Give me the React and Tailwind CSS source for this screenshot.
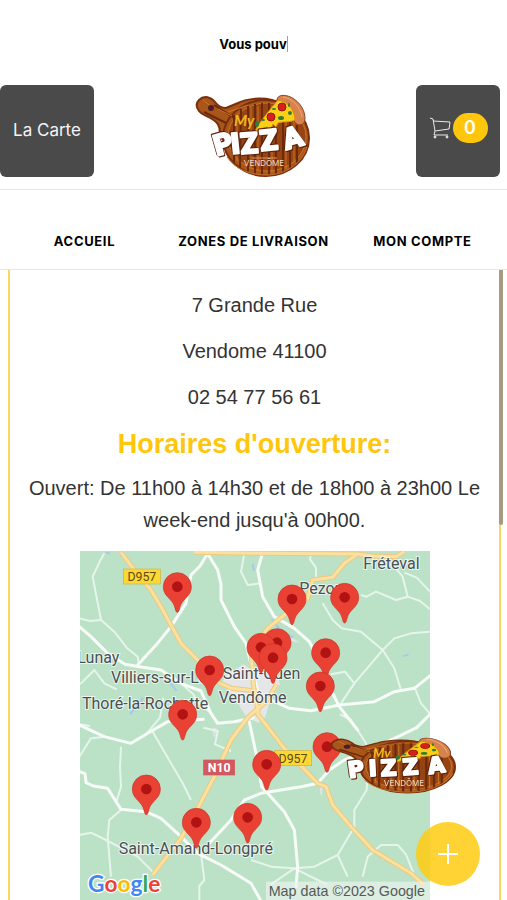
import { useState } from 'react';

const navLinks = [
  { label: 'ACCUEIL', href: '#accueil' },
  { label: 'ZONES DE LIVRAISON', href: '#zones' },
  { label: 'MON COMPTE', href: '#compte' },
];

const addressLines = ['7 Grande Rue', 'Vendome 41100', '02 54 77 56 61'];

// Delivery points, centre of each pin head in map units
const pins = [
  [292, 107],
  [636, 144],
  [794, 139],
  [591, 275],
  [543, 289],
  [579, 320],
  [737, 305],
  [721, 405],
  [389, 357],
  [308, 490],
  [741, 587],
  [560, 640],
  [199, 714],
  [503, 799],
  [349, 814],
];

const places = [
  { name: 'Fréteval', x: 850, y: 55 },
  { name: 'Pezou', x: 658, y: 130 },
  { name: 'Lunay', x: -8, y: 337 },
  { name: 'Villiers-sur-Loir', x: 93, y: 397 },
  { name: 'Thoré-la-Rochette', x: 6, y: 474 },
  { name: 'Saint-Ouen', x: 428, y: 385 },
  { name: 'Vendôme', x: 416, y: 457 },
  { name: 'Saint-Amand-Longpré', x: 116, y: 910 },
];

const smallRoads = [
  'M73 7L60 30L38 77L50 140L63 207L103 242L140 290L173 317L178 347',
  'M-2 202L30 210L63 207',
  'M0 400L43 357L73 397L110 415',
  'M-2 617L33 562L73 557',
  'M123 587L120 650L123 707L110 750',
  'M218 542L273 637L310 700L333 747',
  'M123 777L88 807L83 857L93 977',
  'M-2 852L33 845L78 867L173 917L218 962',
  'M363 907L373 987L358 1005L358 1050',
  'M493 7L483 62L503 102L543 97',
  'M693 7L690 25L708 50L708 80',
  'M843 132L860 137L888 122L948 147L983 137L1020 150L1053 177',
  'M913 27L950 55L968 77L983 137',
  'M973 65L1010 80L1053 125',
  'M728 157L758 207L785 232L843 242L908 297L943 352L963 417',
  'M908 297L943 262L993 247L1053 242',
  'M908 297L823 397L783 457',
  'M753 370L795 362L823 397',
  'M1003 407L1023 457L1053 492',
  'M513 927L573 947L643 952L703 947L773 912L823 827L823 777L860 717L863 640L858 577L813 507L780 490',
  'M643 952L713 987L740 1000',
  'M573 1000L643 952',
  'M848 977L863 917L903 882L953 882L978 910L1000 965',
  'M773 912L803 977',
  'M303 397L340 430L350 450L393 487M200 547L240 500L250 440',
  'M0 520L30 525M370 530L413 540L405 580L453 600',
];

const mainRoads = [
  'M383 8L360 45L333 72L318 157L273 227L230 280L173 342',
  'M383 8L413 57L423 100L423 147L463 227L498 277L513 340L533 420',
  'M-2 227L33 257L83 307L135 340L178 347L243 357L303 397L363 420L393 487L413 517L463 512L520 500',
  'M-2 522L73 557L153 577L203 547L263 512L370 505',
  'M-2 662L15 668L18 695L40 705L83 712L123 775L198 782L243 802L303 857L353 907L423 942L513 997L543 1050',
  'M388 877L453 807L493 747L543 727L663 707L713 697L748 657L793 627L870 597L943 562L1010 530L1053 487',
  'M508 512L528 607L545 707L613 782L643 837L653 947L648 1007',
  'M548 4L533 57L548 137L583 197L643 232L688 272L730 350L753 417L778 467L833 537',
  'M560 455L573 447L628 472L693 479L778 462L883 452L943 422L1003 412L1053 372',
];

const yellowRoads = [
  'M123 4L163 57L213 117L243 167L273 222L303 277L353 327L405 390L455 412L530 420',
  'M343 4L543 7L833 9L880 15L948 17L973 2',
  'M833 9L793 37L758 79L698 87L683 142L613 192L563 232L513 300L520 400L535 485',
  'M218 972L303 862L353 772L403 677L453 567L503 500L560 450L590 400',
  'M530 485L613 592L713 697L738 707L758 762L813 827L878 897L993 967L1033 1002',
];

function RoadSign({ x, y, width, label, red }) {
  return (
    <g>
      <rect x={x} y={y} width={width} height="45" fill={red ? '#d3595f' : '#fdd835'} stroke={red ? '#c25a5f' : '#d2b23c'} strokeWidth="2" />
      <text x={x + width / 2} y={y + 36} textAnchor="middle" fontSize="37" fontWeight={red ? 700 : 400} fill={red ? '#ffffff' : '#5c4a12'}>
        {label}
      </text>
    </g>
  );
}

function DeliveryMap() {
  return (
    <svg viewBox="0 0 1050 1050" role="img" aria-label="Zones de livraison" className="block w-full" fontFamily="Roboto, sans-serif">
      <rect width="1050" height="1050" fill="#bbe2c6" />

      {/* Built-up area and rivers */}
      <path d="M425 395L440 372L490 340L530 365L585 350L600 400L570 450L555 500L535 515L500 500L470 450Z" fill="#e4e6e8" />
      <path d="M270 395L290 420M575 205L600 235L640 260M78 4L90 8M518 40L522 60M190 440L150 490M985 310L970 316M775 60L765 75" fill="none" stroke="#a5c9ea" strokeWidth="6" />
      <path d="M398 530L410 530L405 560L398 550ZM720 705L728 705L726 735L720 725ZM610 255L640 262L660 275L640 272Z" fill="#dfe4e6" />

      <g fill="none" stroke="#e6f5eb" strokeWidth="6" strokeLinejoin="round">
        {smallRoads.map((d) => <path key={d} d={d} />)}
      </g>
      <g fill="none" stroke="#f7fcf8" strokeWidth="9" strokeLinejoin="round" strokeLinecap="round">
        {mainRoads.map((d) => <path key={d} d={d} />)}
      </g>
      <g fill="none" stroke="#ecc981" strokeWidth="15" strokeLinejoin="round">
        {yellowRoads.map((d) => <path key={d} d={d} />)}
      </g>
      <g fill="none" stroke="#fbe1a0" strokeWidth="9" strokeLinejoin="round">
        {yellowRoads.map((d) => <path key={d} d={d} />)}
      </g>

      <RoadSign x={130} y={54} width={111} label="D957" />
      <RoadSign x={583} y={599} width={112} label="D957" />
      <RoadSign x={371} y={627} width={93} label="N10" red />

      <g fontSize="48" fill="#4a4f54" stroke="#ffffff" strokeOpacity="0.7" strokeWidth="6" paintOrder="stroke">
        {places.map((place) => (
          <text key={place.name} x={place.x} y={place.y}>{place.name}</text>
        ))}
      </g>

      {pins.map(([x, y]) => (
        <g key={`${x}-${y}`} transform={`translate(${x} ${y})`}>
          <path d="M0 77C-7 77 -5 58 -16 45C-28 30 -42 22 -42 0A42 42 0 0 1 42 0C42 22 28 30 16 45C5 58 7 77 0 77Z" fill="#e94235" stroke="#c5352b" strokeWidth="2" />
          <circle r="16" fill="#b11313" />
        </g>
      ))}

      <text x="24" y="1022" fontSize="68" fontWeight="700" fontFamily="Lato, sans-serif" stroke="#ffffff" strokeWidth="8" paintOrder="stroke">
        <tspan fill="#4285f4">G</tspan>
        <tspan fill="#ea4335">o</tspan>
        <tspan fill="#fbbc05">o</tspan>
        <tspan fill="#4285f4">g</tspan>
        <tspan fill="#34a853">l</tspan>
        <tspan fill="#ea4335">e</tspan>
      </text>
      <rect x="558" y="992" width="492" height="58" fill="#eef3ef" fillOpacity="0.65" />
      <text x="566" y="1034" fontSize="43" fill="#555a57" fontFamily="'Liberation Sans', sans-serif">Map data ©2023 Google</text>
    </svg>
  );
}

// Board and slice artwork, drawn on a 130x100 canvas
function PizzaBoard() {
  return (
    <g>
      <g fill="#a9561a" stroke="#7a2e0c" strokeWidth="2">
        <path d="M9 15C14 10 21 12 25 17C28 21 31 23 36 23L48 18C56 14 70 12 82 15L92 20L58 60L30 48C30 40 27 37 22 34C18 31 12 30 9 26C6 22 6 18 9 15Z" />
        <ellipse cx="76" cy="53" rx="43" ry="38" />
      </g>
      <ellipse cx="77" cy="52" rx="39" ry="34" fill="#984412" stroke="#c8722b" strokeWidth="1" />
      <g fill="none" stroke="#6b2a0b" strokeWidth="2">
        <path d="M44 30V78M51 24L50 83M58 21V86M65 19V88M72 18V90M79 18V90M86 18V89M93 20V87M100 30V84M107 40V78" />
        <path d="M24 20L46 34M14 27L36 38" />
      </g>
      <g fill="none" stroke="#c9752a" strokeWidth="1">
        <path d="M47 30V76M61 22V84M68 21V86M82 20V88M96 25V84M104 36V78M28 24L42 31M13 15L23 23M38 27L58 20" />
        <path d="M37 72C45 84 60 90 76 90C96 90 112 78 117 62" />
      </g>
      <circle cx="21" cy="23" r="3" fill="#4e1d2b" />
      <path d="M87 15C87 9 97 9 104 14C113 20 117 31 114 38C110 42 104 39 104 34C104 25 98 19 87 15Z" fill="#d8824d" stroke="#8b4526" strokeWidth="1" />
      <path d="M93 12C102 13 110 21 112 32" fill="none" stroke="#eba878" strokeWidth="1" />
      <path d="M88 15C98 17 105 25 105 35C98 38 94 36 88 38L86 42L83 39L80 47L77 42C73 43 69 44 65 46C69 38 77 28 88 15Z" fill="#fbcf13" stroke="#d98d10" strokeWidth="1" />
      <g fill="#d3211f" stroke="#9d1513" strokeWidth="1">
        <circle cx="92" cy="22" r="4" />
        <circle cx="81" cy="32" r="4" />
      </g>
      <g fill="#2f7d3a">
        <ellipse cx="84" cy="24" rx="2" ry="1" />
        <ellipse cx="91" cy="33" rx="3" ry="2" />
        <ellipse cx="100" cy="28" rx="2" ry="2" />
        <ellipse cx="73" cy="35" rx="2" ry="1" />
        <ellipse cx="67" cy="39" rx="2" ry="3" />
        <ellipse cx="99" cy="20" rx="1" ry="2" />
      </g>
    </g>
  );
}

function Logo() {
  return (
    <svg viewBox="0 0 130 100" width="130" height="100" role="img" aria-label="My Pizza Vendôme">
      <PizzaBoard />
      <text x="44" y="41" fontSize="15" fontStyle="italic" fontWeight="700" fill="#f0b81f" fontFamily="Lato, sans-serif">My</text>
      <text
        x="27 42 51 71 96"
        y="71 69 69 66 65"
        rotate="-16 -6 -4 -6 -16"
        fontSize="29"
        fontWeight="900"
        fill="#ffffff"
        stroke="#ffffff"
        strokeWidth="2"
        strokeLinejoin="round"
        fontFamily="Roboto, sans-serif"
        className="[filter:drop-shadow(1px_1px_0_#5b2008)_drop-shadow(-1px_-1px_0_#5b2008)]"
      >
        PIZZA
      </text>
      <path d="M62 73H87" stroke="#d99a5c" strokeWidth="1" />
      <text x="74" y="81" textAnchor="middle" fontSize="8" fill="#f3d9c0" fontFamily="Inter, sans-serif">VENDÔME</text>
    </svg>
  );
}

// Wide, flatter variant for the floating badge
function WideLogo() {
  return (
    <svg viewBox="0 0 130 60" width="130" height="60" role="img" aria-label="My Pizza Vendôme">
      <g transform="translate(-5 -5) scale(1.1 0.68)">
        <PizzaBoard />
      </g>
      <text x="44" y="22" fontSize="13" fontStyle="italic" fontWeight="700" fill="#f0b81f" fontFamily="Lato, sans-serif">My</text>
      <text
        x="20 40 52 74 100"
        y="42 40 40 39 38"
        rotate="-8 -3 -3 -4 -8"
        fontSize="22"
        fontWeight="700"
        fill="#ffffff"
        stroke="#ffffff"
        strokeWidth="2"
        strokeLinejoin="round"
        fontFamily="'DejaVu Sans', sans-serif"
        className="[filter:drop-shadow(1px_1px_0_#5b2008)_drop-shadow(-1px_-1px_0_#5b2008)]"
      >
        PIZZA
      </text>
      <text x="75" y="50" textAnchor="middle" fontSize="8" fill="#f3d9c0" fontFamily="Inter, sans-serif">VENDÔME</text>
    </svg>
  );
}

function CartIcon() {
  return (
    <svg viewBox="0 0 22 22" width="22" height="22" fill="none" stroke="#e8e8e8" strokeWidth="1" strokeLinejoin="round" aria-hidden="true">
      <path d="M1 1L4 2L6 14L20 12L21 5L4 4" />
      <path d="M6 14L5 18H19" />
      <circle cx="6" cy="20" r="1" fill="#e8e8e8" />
      <circle cx="18" cy="20" r="1" fill="#e8e8e8" />
    </svg>
  );
}

function App() {
  const [cartCount] = useState(0);

  return (
    <div className="relative h-screen overflow-hidden bg-white font-['Inter',sans-serif] text-black">
      {/* Typed announcement */}
      <div className="flex h-21 items-center justify-center pt-1 text-[13px] font-bold">
        <span className="border-r border-gray-400 leading-4">Vous pouv</span>
      </div>

      <header className="flex items-start justify-between border-b border-gray-200 pt-px pr-[7px] pb-3">
        <button type="button" className="h-[92px] w-[94px] rounded-md bg-[#4a4a4a] text-[17px] text-gray-100">
          La Carte
        </button>
        <a href="#accueil" className="-mb-3">
          <Logo />
        </a>
        <button type="button" aria-label="Panier" className="flex h-[92px] w-[84px] items-center justify-center gap-0.5 rounded-md bg-[#4a4a4a] pb-1.5">
          <CartIcon />
          <span className="flex h-[30px] w-[35px] items-center justify-center rounded-full bg-[#ffc60b] text-lg font-semibold text-white">
            {cartCount}
          </span>
        </button>
      </header>

      <nav className="grid h-20 grid-cols-3 items-center border-b border-gray-200 pt-6 text-center text-[13px] font-bold tracking-wider">
        {navLinks.map((link) => (
          <a key={link.label} href={link.href}>{link.label}</a>
        ))}
      </nav>

      <main className="mr-1.5 ml-2 border-x-2 border-[#f9d75e] px-4 pt-5 text-center font-['Liberation_Sans',sans-serif] text-xl text-[#333333]">
        {addressLines.map((line) => (
          <p key={line} className="mb-4 leading-[30px]">{line}</p>
        ))}
        <h2 className="mb-3 text-[27px] leading-8 font-bold text-[#ffc60b]">Horaires d'ouverture:</h2>
        <p className="mb-[15px] leading-8">
          Ouvert: De 11h00 à 14h30 et de 18h00 à 23h00 Le week-end jusqu'à 00h00.
        </p>
        <div className="mx-auto w-[350px] max-w-full">
          <DeliveryMap />
        </div>
      </main>

      {/* Scroll thumb over the right edge of the frame */}
      <div className="absolute top-[270px] right-1 h-[255px] w-1 rounded-b bg-[#a89a80]"></div>

      <div className="fixed right-12 bottom-[104px]">
        <WideLogo />
      </div>
      <button type="button" aria-label="Ouvrir le menu" className="fixed right-[27px] bottom-3.5 flex size-16 items-center justify-center rounded-full bg-[#ffcb11]/85">
        <svg viewBox="0 0 20 20" width="20" height="20" stroke="#ffffff" strokeWidth="2" aria-hidden="true">
          <path d="M10 0V20M0 10H20" />
        </svg>
      </button>
    </div>
  );
}

export default App;
